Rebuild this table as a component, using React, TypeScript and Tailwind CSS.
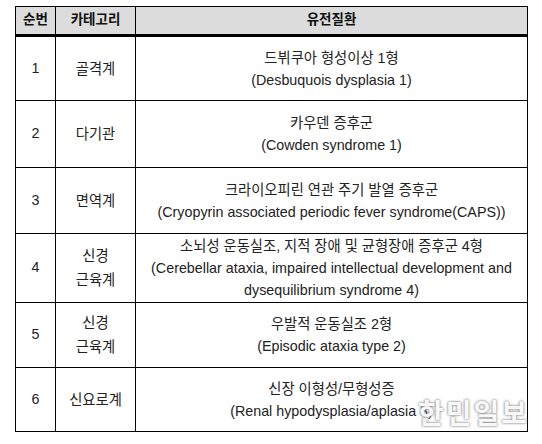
const rows = [
  { no: '1', cat: ['골격계'], ko: '드뷔쿠아 형성이상 1형', en: ['(Desbuquois dysplasia 1)'], h: 'h-[65px]' },
  { no: '2', cat: ['다기관'], ko: '카우덴 증후군', en: ['(Cowden syndrome 1)'], h: 'h-[67px]' },
  { no: '3', cat: ['면역계'], ko: '크라이오피린 연관 주기 발열 증후군', en: ['(Cryopyrin associated periodic fever syndrome(CAPS))'], h: 'h-[66px]' },
  {
    no: '4',
    cat: ['신경', '근육계'],
    ko: '소뇌성 운동실조, 지적 장애 및 균형장애 증후군 4형',
    en: ['(Cerebellar ataxia, impaired intellectual development and', 'dysequilibrium syndrome 4)'],
    h: 'h-[69px]',
  },
  { no: '5', cat: ['신경', '근육계'], ko: '우발적 운동실조 2형', en: ['(Episodic ataxia type 2)'], h: 'h-[65px]' },
  { no: '6', cat: ['신요로계'], ko: '신장 이형성/무형성증', en: ['(Renal hypodysplasia/aplasia 3)'], h: 'h-[64px]' },
];

export default function App() {
  return (
    <div className="relative w-[542px] h-[444px] bg-white text-[#222] font-['Liberation_Sans','Noto_Sans_CJK_KR',sans-serif] text-[14.3px]">
      <div className="pt-[6px] pl-[15px]">
        <table className="w-[513px] border-collapse table-fixed">
          <colgroup>
            <col className="w-[40px]" />
            <col className="w-[80px]" />
            <col />
          </colgroup>
          <thead>
            <tr className="h-[29px] bg-[#dcdcdc] border-b-[3px] border-black">
              <th className="border border-black font-bold text-[13.5px] text-[#111]">순번</th>
              <th className="border border-black font-bold text-[13.5px] text-[#111]">카테고리</th>
              <th className="border border-black font-bold text-[13.5px] text-[#111]">유전질환</th>
            </tr>
          </thead>
          <tbody>
            {rows.map((r) => (
              <tr key={r.no} className={r.h}>
                <td className="border border-black text-center align-middle">{r.no}</td>
                <td className="border border-black text-center align-middle leading-[24px]">
                  {r.cat.map((c) => (
                    <div key={c}>{c}</div>
                  ))}
                </td>
                <td className="border border-black text-center align-middle leading-[22px]">
                  <div>{r.ko}</div>
                  {r.en.map((e) => (
                    <div key={e}>{e}</div>
                  ))}
                </td>
              </tr>
            ))}
          </tbody>
        </table>
      </div>
      <div className="absolute left-[418px] top-[398px] text-[28px] font-bold text-white/95 tracking-[2px] [text-shadow:0_0_3px_#888,0_0_2px_#aaa] font-['Noto_Sans_CJK_KR',sans-serif] leading-none">
        한민일보
      </div>
    </div>
  );
}
